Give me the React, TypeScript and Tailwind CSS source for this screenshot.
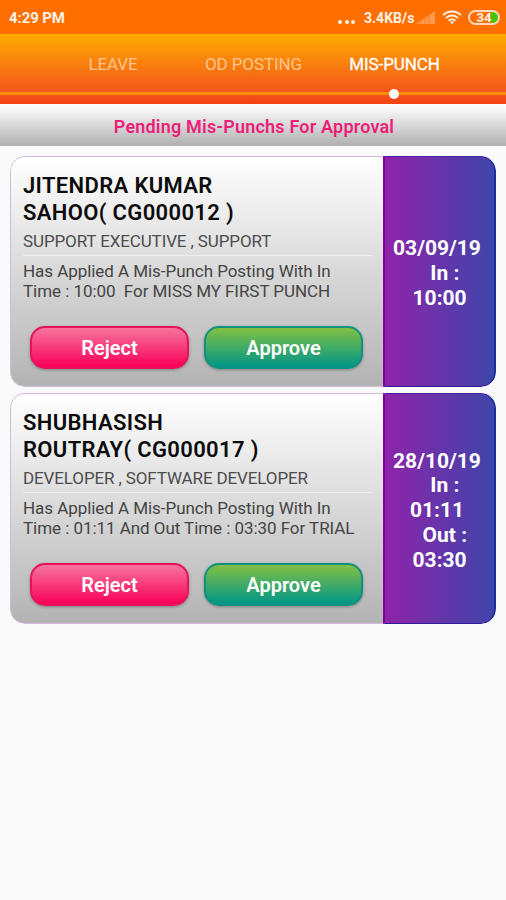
type Punch = {
  name: string[];
  role: string;
  message: string[];
  when: string[];
};

const punches: Punch[] = [
  {
    name: ["JITENDRA KUMAR", "SAHOO( CG000012 )"],
    role: "SUPPORT EXECUTIVE , SUPPORT",
    message: ["Has Applied A Mis-Punch Posting With In", "Time : 10:00  For MISS MY FIRST PUNCH"],
    when: ["03/09/19", "   In :", " 10:00"],
  },
  {
    name: ["SHUBHASISH", "ROUTRAY( CG000017 )"],
    role: "DEVELOPER , SOFTWARE DEVELOPER",
    message: ["Has Applied A Mis-Punch Posting With In", "Time : 01:11 And Out Time : 03:30 For TRIAL"],
    when: ["28/10/19", "   In :", "01:11", "   Out :", " 03:30"],
  },
];

function StatusBar() {
  return (
    <div className="flex h-[34px] items-center bg-[#ff6f00] pl-[9px] pr-[6px] text-[#fff1e6]">
      <span className="pt-[2px] text-[15px] font-bold leading-none tracking-[-0.1px]">4:29 PM</span>
      <div className="ml-auto flex items-center">
        <span className="mr-[9px] mt-[9px] flex gap-[2.5px]">
          <i className="size-[4px] rounded-full bg-[#fff1e6]" />
          <i className="size-[4px] rounded-full bg-[#fff1e6]" />
          <i className="size-[4px] rounded-full bg-[#fff1e6]" />
        </span>
        <span className="w-[50px] whitespace-nowrap pt-[2px] text-[14px] font-bold leading-none">3.4KB/s</span>
        <svg className="ml-[2px]" width="19" height="13" viewBox="0 0 19 13">
          <path d="M0 13 19 0V13Z" fill="#ff9a50" />
          <path d="M5 8V13M9 5V13M13 3V13" stroke="#ff7d18" strokeWidth="1" />
        </svg>
        <svg className="ml-[7px]" width="20" height="15" viewBox="0 0 20 15" fill="none" stroke="#fff1e6" strokeWidth="1.9">
          <path d="M1 5.2C6 .2 14 .2 19 5.2M3.8 8.1C7.5 4.7 12.5 4.7 16.2 8.1M6.6 10.8C8.7 9 11.3 9 13.4 10.8" />
          <path d="M8 12 10 14.5 12 12Q10 10.6 8 12Z" fill="#fff1e6" stroke="none" />
        </svg>
        <span className="ml-[6px] flex h-[15px] w-[32px] items-center justify-center rounded-full border-2 border-[#ffd7bd] bg-[linear-gradient(90deg,#ff6f00_74%,#43c400_74%)] pt-px text-[13px] font-bold leading-none">
          34
        </span>
      </div>
    </div>
  );
}

function Tabs() {
  return (
    <div className="relative flex h-[70px] bg-[linear-gradient(#ffab00,#f4511e_61px,#f4400f)] pl-[43px] text-[17px]">
      <span className="w-[140px] pt-[19px] text-center leading-[22px] tracking-[-0.1px] text-[#ffc78c]">LEAVE</span>
      <span className="w-[141px] pt-[19px] text-center leading-[22px] tracking-[-0.1px] text-[#ffc78c]">OD POSTING</span>
      <span className="w-[141px] pt-[19px] text-center leading-[22px] tracking-[-0.1px] text-white [-webkit-text-stroke:0.3px_white]">MIS-PUNCH</span>
      <i className="absolute inset-x-0 top-[58px] h-[3px] bg-[#ff8f00]" />
      <i className="absolute left-[389px] top-[55px] size-[10px] rounded-full bg-white" />
    </div>
  );
}

function Card({ punch }: { punch: Punch }) {
  return (
    <article className="flex h-[231px] overflow-hidden rounded-[15px]">
      <div className="w-[373px] rounded-l-[15px] border border-r-0 border-[#d6b8df] bg-[linear-gradient(#ffffff,#b3b3b3)] pl-[12px] pr-[11px] pt-[15px] whitespace-pre">
        <h2 className="text-[22px] font-semibold leading-[27px] tracking-[0.35px] text-[#0c0c0c]">
          {punch.name.map((line) => (
            <div key={line}>{line}</div>
          ))}
        </h2>
        <p className="h-[30px] border-b border-[#eeeeee] pt-[4px] text-[17px] leading-[22px] tracking-[-0.12px] text-[#4c4c4c]">
          {punch.role}
        </p>
        <p className="pt-[5px] text-[17px] leading-[20px] tracking-[-0.05px] text-[#444444]">
          {punch.message.map((line) => (
            <span key={line} className="block">{line}</span>
          ))}
        </p>
        <div className="flex gap-[15px] pl-[7px] pt-[25px]">
          <button className="h-[43px] w-[159px] rounded-[15px] border-2 border-[#e8115b] bg-[linear-gradient(#f5749e,#fa0057)] text-[20px] font-semibold text-white shadow-[0_1px_3px_#00000050]">
            Reject
          </button>
          <button className="h-[43px] w-[159px] rounded-[15px] border-2 border-[#10907f] bg-[linear-gradient(#83c044,#009688)] text-[20px] font-semibold text-white shadow-[0_1px_3px_#00000050]">
            Approve
          </button>
        </div>
      </div>
      <div className="flex w-[113px] flex-col items-center justify-center rounded-r-[15px] border border-x-2 border-b-[#311b92] border-l-[#8200a0] border-r-[#1a2f9e] border-t-[#4520a0] bg-[linear-gradient(90deg,#8e24aa,#3f45aa)] pt-[4px] pr-[5px] text-[21px] font-bold leading-[24.7px] text-white whitespace-pre">
        {punch.when.map((line) => (
          <span key={line}>{line}</span>
        ))}
      </div>
    </article>
  );
}

export default function App() {
  return (
    <main className="h-[900px] w-[506px] overflow-hidden bg-[#fafafa] font-[Roboto,sans-serif]">
      <StatusBar />
      <Tabs />
      <h1 className="mt-px h-[41px] bg-[linear-gradient(#ffffff,#b0b0b0)] pl-[2px] text-center text-[18px] font-semibold leading-[43px] tracking-[0.2px] text-[#ed1e79]">
        Pending Mis-Punchs For Approval
      </h1>
      <section className="flex flex-col gap-[6px] px-[10px] pt-[10px]">
        {punches.map((punch) => (
          <Card key={punch.role} punch={punch} />
        ))}
      </section>
    </main>
  );
}
